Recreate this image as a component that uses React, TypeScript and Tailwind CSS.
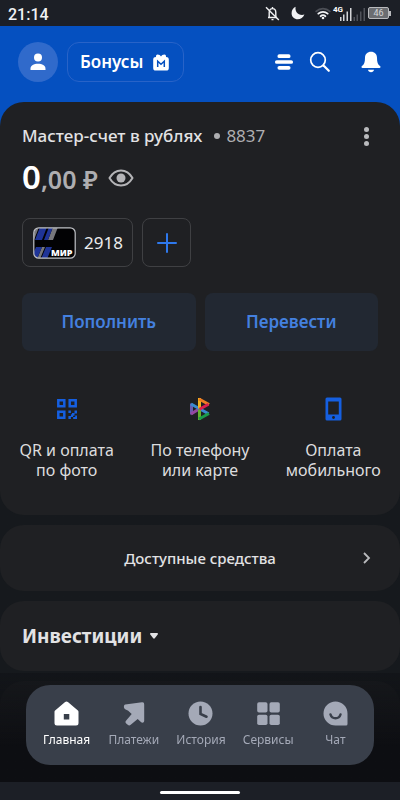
import React from "react";

function StatusBar() {
  return (
    <header className="flex h-[26px] shrink-0 items-center justify-between bg-[#1c1f26] pr-[9px] pl-2 text-white">
      <span className="pt-1 font-[Roboto,sans-serif] text-base leading-6 font-medium text-[#f1f2f4]">21:14</span>
      <div className="flex items-center">
        <svg className="mr-[11px]" width="15" height="15" viewBox="0 0 15 15" fill="none" stroke="#f1f2f4" strokeWidth="1.4">
          <path d="M3 11.5h9M4.2 11V6.5C4.2 4 5.5 2.6 7.5 2.6s3.3 1.4 3.3 3.9V11M7.5 1v1.6M6.5 13.6h2" />
          <path d="M1 1.2 13.8 14" />
        </svg>
        <svg className="mr-[10px]" width="14" height="14" viewBox="0 0 14 14" fill="#f1f2f4">
          <path d="M4.6.8C3.6 5.8 7.6 10.2 13.4 8.6 12.3 11.8 9.6 13.3 6.8 13.3 3.3 13.3.6 10.6.6 7.2.6 4.3 2.2 1.9 4.6.8Z" />
        </svg>
        <svg className="mr-[2px]" width="16" height="13" viewBox="0 0 16 13" fill="none" strokeLinecap="round">
          <path d="M1.2 4.3C5 .6 11 .6 14.8 4.3" stroke="#4c4f56" strokeWidth="1.8" />
          <path d="M3.3 6.7C6 4.2 10 4.2 12.7 6.7M5.6 9.2C7 8 9 8 10.4 9.2" stroke="#f1f2f4" strokeWidth="1.8" />
          <circle cx="8" cy="11" r="1.3" fill="#f1f2f4" />
        </svg>
        <div className="flex h-[15px] items-end">
          <span className="-mr-1 self-start font-[Roboto,sans-serif] text-[8px] leading-[8px] font-bold">4G</span>
          <svg width="27" height="13" viewBox="0 0 27 13">
            <path d="M1 9h1.5v4H1zM4 6.5h1.5V13H4zM7.5 3.5H9V13H7.5zM11 0h1.5v13H11z" fill="#d4d5d8" />
            <path d="M14.5 9H16v4h-1.5zM17.5 6.5H19V13h-1.5zM21 3.5h1.5V13H21zM24.5 0H26v13h-1.5z" fill="#50535a" />
          </svg>
        </div>
        <div className="ml-[2px] flex items-center">
          <span className="flex h-3 w-[21px] items-center justify-center rounded-[2px] border border-[#b9babd] bg-[#6b6d71] font-[Roboto,sans-serif] text-[9px] leading-[10px] text-[#d4d5d8]">46</span>
          <span className="h-[5px] w-[2px] bg-[#b9babd]" />
        </div>
      </div>
    </header>
  );
}

function TopBar() {
  return (
    <div className="flex h-[76px] items-center pr-[19px] pb-1 pl-[18px]">
      <button aria-label="Профиль" className="flex size-10 items-center justify-center rounded-full bg-[#306acb]">
        <svg width="16" height="18" viewBox="0 0 16 18" fill="#fff">
          <circle cx="8" cy="4.5" r="4" />
          <path d="M.5 17v-1.3c0-3.3 3.3-5 7.5-5s7.5 1.7 7.5 5V17z" />
        </svg>
      </button>
      <button className="ml-[9px] flex h-10 w-[117px] items-center justify-between rounded-xl border border-[#2863c8] bg-[#0550c0] pr-[14px] pl-3 text-[17px] leading-6 font-semibold text-white">
        Бонусы
        <svg width="16" height="17" viewBox="0 0 16 17">
          <path d="M4.5.5c1.8 0 2.8.8 3.5 2 .7-1.2 1.7-2 3.5-2C12.6.5 13.2 1.5 13 3c1.8 0 2.8.8 2.8 2.5v8.5a2.6 2.6 0 0 1-2.6 2.6H2.8A2.6 2.6 0 0 1 .2 14V5.5C.2 3.8 1.2 3 3 3 2.8 1.5 3.4.5 4.5.5Z" fill="#fff" />
          <path d="M4.7 13V7.3L8 10.3l3.3-3V13" fill="none" stroke="#0550c0" strokeWidth="1.5" />
        </svg>
      </button>
      <div className="ml-auto flex items-center">
        <button aria-label="Меню" className="mr-[15px]">
          <svg width="20" height="16" viewBox="0 0 20 16" stroke="#fff" strokeWidth="3.7" strokeLinecap="round">
            <path d="M5.3 2.2h9.4M2.8 8h14.4M5.3 13.8h9.4" />
          </svg>
        </button>
        <button aria-label="Поиск" className="mr-[30px]">
          <svg width="22" height="22" viewBox="0 0 22 22" fill="none" stroke="#fff" strokeWidth="1.7" strokeLinecap="round">
            <circle cx="9" cy="9" r="7.3" />
            <path d="m14.5 14.5 5.3 5.3" strokeWidth="2.2" />
          </svg>
        </button>
        <button aria-label="Уведомления">
          <svg width="20" height="22" viewBox="0 0 20 22" fill="#fff">
            <path d="M10 .8c3.6 0 6 2.5 6 6 0 4.5.8 6.7 3 8.2.9.7.6 2-.6 2H1.600c-1.200 0-1.500-1.300-.6-2C3.200 13.500 4 11.300 4 6.800c0-3.500 2.400-6 6-6Z" />
            <path d="M7 18.800h6c-.2 1.500-1.400 2.500-3 2.500s-2.800-1-3-2.500Z" />
          </svg>
        </button>
      </div>
    </div>
  );
}

function MirCard() {
  return (
    <svg width="43" height="32" viewBox="0 0 43 32">
      <defs>
        <clipPath id="card">
          <rect x="1" y="1" width="41" height="30" rx="5" />
        </clipPath>
      </defs>
      <g clipPath="url(#card)">
        <path d="M0 0h43v32H0z" fill="#020204" />
        <path d="M0 0h6L1 13H0zM20 0h5l-5 13h-5z" fill="#77777c" />
        <path d="M7 0h7L9 13H2zM16 0h4l-5 13h-4z" fill="#1f3497" />
        <path d="M9 20h3l-5 12H4z" fill="#77777c" />
        <path d="M3 20h6L4 32H-2zM13 20h6l-5 12H8z" fill="#1f3497" />
      </g>
      <rect x=".8" y=".8" width="41.400" height="30.400" rx="5" fill="none" stroke="#bfc1c6" strokeWidth="1.200" />
      <text x="18" y="29" fill="#fff" className="font-['Noto_Sans',sans-serif] text-[9px] font-black">МИР</text>
    </svg>
  );
}

function QrIcon() {
  return (
    <svg width="20" height="20" viewBox="0 0 20 20">
      <path d="M1.300 1.300h6v6h-6zM12.700 1.300h6v6h-6zM1.300 12.700h6v6h-6z" fill="none" stroke="#155fe0" strokeWidth="2.500" />
      <path d="M11.400 11.400h2.500v2.500h-2.500zM17.500 11.400H20v3.200h-2.500v2.200H15v-2.700h2.500zM11.400 17h2.500v-1.800H16V18h-2.100v2h-2.500zM20 16.500V20h-3.800v-2h2v-1.500z" fill="#155fe0" />
    </svg>
  );
}

function FastPaymentIcon() {
  return (
    <svg width="20" height="24" viewBox="0 0 20 24" fill="none" strokeWidth="3">
      <path d="M1.500 17.500v-11" stroke="#6a5bb0" />
      <path d="m1 17 8-5" stroke="#96489f" />
      <path d="m1 7 17.500 9.800" stroke="#3a8bd0" />
      <path d="M9.500 12.500v10.500" stroke="#65b32e" />
      <path d="m9 22 10-5.500" stroke="#1a9a4a" />
      <path d="M9.500 1v10.500" stroke="#f2b321" />
      <path d="m9 2 10 5.500" stroke="#ef7d22" />
      <path d="M18.500 7.300 9.500 12.300" stroke="#d9204e" />
    </svg>
  );
}

function PhoneIcon() {
  return (
    <svg width="17" height="24" viewBox="0 0 17 24">
      <rect x=".5" y=".5" width="16" height="23" rx="1.500" fill="#155fe0" />
      <path d="M3.200 4.500h10.600v13H3.200z" fill="#1f2023" />
      <circle cx="8.500" cy="20.500" r="1.400" fill="#1f2023" />
    </svg>
  );
}

const actions = [
  { first: "QR и оплата", second: "по фото", icon: <QrIcon /> },
  { first: "По телефону", second: "или карте", icon: <FastPaymentIcon /> },
  { first: "Оплата", second: "мобильного", icon: <PhoneIcon /> },
];

function AccountCard() {
  return (
    <section className="rounded-3xl bg-[#1f2023] px-[22px] pt-[22px] pb-[35px]">
      <div className="flex h-6 items-center text-[17px] leading-6">
        <h1 className="font-medium text-[#e2e2e4]">Мастер-счет в рублях</h1>
        <span className="mr-[6px] ml-3 size-[6px] rounded-full bg-[#aeaeb1]" />
        <span className="text-[#aeaeb1]">8837</span>
        <button aria-label="Ещё" className="ml-auto flex w-6 flex-col items-center gap-[2px]">
          <span className="size-[5px] rounded-full bg-[#b9babd]" />
          <span className="size-[5px] rounded-full bg-[#b9babd]" />
          <span className="size-[5px] rounded-full bg-[#b9babd]" />
        </button>
      </div>
      <div className="mt-[10px] flex h-10 items-center">
        <p className="font-semibold text-[#aeaeb1]">
          <span className="text-[33px] leading-10 text-white">0</span>
          <span className="text-[25px] leading-10">,00 ₽</span>
        </p>
        <button aria-label="Скрыть баланс" className="ml-[10px]">
          <svg width="26" height="18" viewBox="0 0 26 18" fill="none" stroke="#b4b4b7" strokeWidth="2">
            <path d="M1.500 9C4.300 4.200 8.200 1.500 13 1.500S21.700 4.200 24.500 9C21.700 13.800 17.800 16.500 13 16.500S4.300 13.800 1.500 9Z" strokeLinejoin="round" />
            <circle cx="13" cy="9" r="4.500" fill="#b4b4b7" stroke="none" />
          </svg>
        </button>
      </div>
      <div className="mt-5 flex gap-[9px]">
        <button className="flex h-[49px] w-[111px] items-center justify-between rounded-lg border border-[#3f4043] pr-[9px] pl-[10px] text-[17px] leading-6 text-[#ececee]">
          <MirCard />
          2918
        </button>
        <button aria-label="Добавить карту" className="flex size-[49px] items-center justify-center rounded-lg border border-[#3f4043]">
          <svg width="20" height="20" viewBox="0 0 20 20" stroke="#2e78ec" strokeWidth="2" strokeLinecap="round">
            <path d="M10 1v18M1 10h18" />
          </svg>
        </button>
      </div>
      <div className="mt-[26px] grid grid-cols-2 gap-[9px] text-[17px] leading-6 font-semibold text-[#4480df]">
        <button className="h-[58px] rounded-lg bg-[#222832]">Пополнить</button>
        <button className="h-[58px] rounded-lg bg-[#222832]">Перевести</button>
      </div>
      <div className="-mx-[22px] mt-[46px] grid grid-cols-3">
        {actions.map((a) => (
          <button key={a.first} className="flex flex-col items-center text-base leading-5 whitespace-nowrap text-[#dcdcde]">
            <span className="mb-[19px] flex h-6 items-center">{a.icon}</span>
            <span>{a.first}</span>
            <span>{a.second}</span>
          </button>
        ))}
      </div>
    </section>
  );
}

const tabs = [
  {
    label: "Главная",
    active: true,
    icon: (
      <path d="M10.600 1.100a2 2 0 0 1 2.800 0l10 8.400c.4.400.6.800.6 1.400V22a2.500 2.500 0 0 1-2.500 2.500h-19A2.500 2.500 0 0 1 0 22V10.900c0-.6.200-1 .6-1.400zM9.300 13v5.500h5.500V13z" fillRule="evenodd" />
    ),
  },
  {
    label: "Платежи",
    active: false,
    icon: (
      <path d="M3.700 3.500 20.500 1.300a2 2 0 0 1 2.200 2.200v16.200c0 2-2 2.500-3.300 1.300l-3.200-3-7 5.800c-1 .8-2 .8-3 0l-1.500-1.300c-1-1-1-2 0-3l5.500-6.500-3.500-3.300-3-1.500C2 7.200 2 4 3.700 3.500Z" />
    ),
  },
  {
    label: "История",
    active: false,
    icon: (
      <>
        <circle cx="12" cy="12.500" r="12" />
        <path d="M12 6v7l6 2.700" fill="none" stroke="#393f4a" strokeWidth="2.600" strokeLinecap="round" />
      </>
    ),
  },
  {
    label: "Сервисы",
    active: false,
    icon: (
      <>
        <rect x=".7" y="1.300" width="10.300" height="10.300" rx="1.800" />
        <rect x="13" y="1.300" width="10.300" height="10.300" rx="1.800" />
        <rect x=".7" y="13.700" width="10.300" height="10.300" rx="1.800" />
        <rect x="13" y="13.700" width="10.300" height="10.300" rx="1.800" />
      </>
    ),
  },
  {
    label: "Чат",
    active: false,
    icon: (
      <>
        <path d="M12 .5a12 12 0 0 1 12 12V23a1.500 1.500 0 0 1-1.500 1.500H12a12 12 0 0 1 0-24Z" />
        <path d="M7 13.500c1.500 5 8.500 5 10 0" fill="none" stroke="#393f4a" strokeWidth="2.500" strokeLinecap="round" />
      </>
    ),
  },
];

function BottomBar() {
  return (
    <footer className="fixed inset-x-0 bottom-0">
      <div className="bg-linear-to-b from-[#111317]/60 to-[#0d0e12] to-70% px-[26px] pt-3 pb-[17px]">
        <nav className="grid h-20 grid-cols-5 rounded-3xl bg-[#393f4a] pt-4 pr-[5px] pl-[7px]">
          {tabs.map((t) => (
            <button
              key={t.label}
              className={`flex flex-col items-center text-xs leading-4 ${t.active ? "text-white" : "text-[#a4a9b7]"}`}
            >
              <svg className="mb-[6px]" width="25" height="25" viewBox="0 0 24 25" fill="currentColor">
                {t.icon}
              </svg>
              {t.label}
            </button>
          ))}
        </nav>
      </div>
      <div className="flex h-[18px] justify-center bg-[#1c1f26] pt-[9px]">
        <span className="h-[3px] w-20 rounded-full bg-white" />
      </div>
    </footer>
  );
}

export default function App() {
  return (
    <div className="flex min-h-screen flex-col bg-[#16191d] font-['Noto_Sans',sans-serif]">
      <StatusBar />
      <main className="bg-linear-to-b from-[#0550c0] from-[140px] to-[#16191d] to-[140px] pb-5">
        <TopBar />
        <div className="flex flex-col gap-[10px]">
          <AccountCard />
          <button className="flex h-[66px] items-center rounded-3xl bg-[#1f2023] px-[22px] text-[15px] leading-5 font-medium text-[#e2e2e4]">
            <span className="flex-1 pl-5">Доступные средства</span>
            <svg className="mr-1" width="16" height="16" viewBox="0 0 16 16" fill="none" stroke="#b9babd" strokeWidth="1.800">
              <path d="m6 3 5 5-5 5" />
            </svg>
          </button>
          <section className="flex h-[70px] items-center rounded-3xl bg-[#1f2023] px-[22px]">
            <button className="flex items-center gap-2 text-[19px] leading-6 font-bold text-[#e2e2e4]">
              Инвестиции
              <svg width="8" height="6" viewBox="0 0 8 6" fill="currentColor">
                <path d="M1 0h6c1 0 1.300.8.700 1.500L4.800 5.300c-.5.600-1.100.6-1.600 0L.3 1.500C-.3.800 0 0 1 0Z" />
              </svg>
            </button>
          </section>
          <section className="h-[98px] rounded-3xl bg-[#1f2023]" />
        </div>
      </main>
      <BottomBar />
    </div>
  );
}
